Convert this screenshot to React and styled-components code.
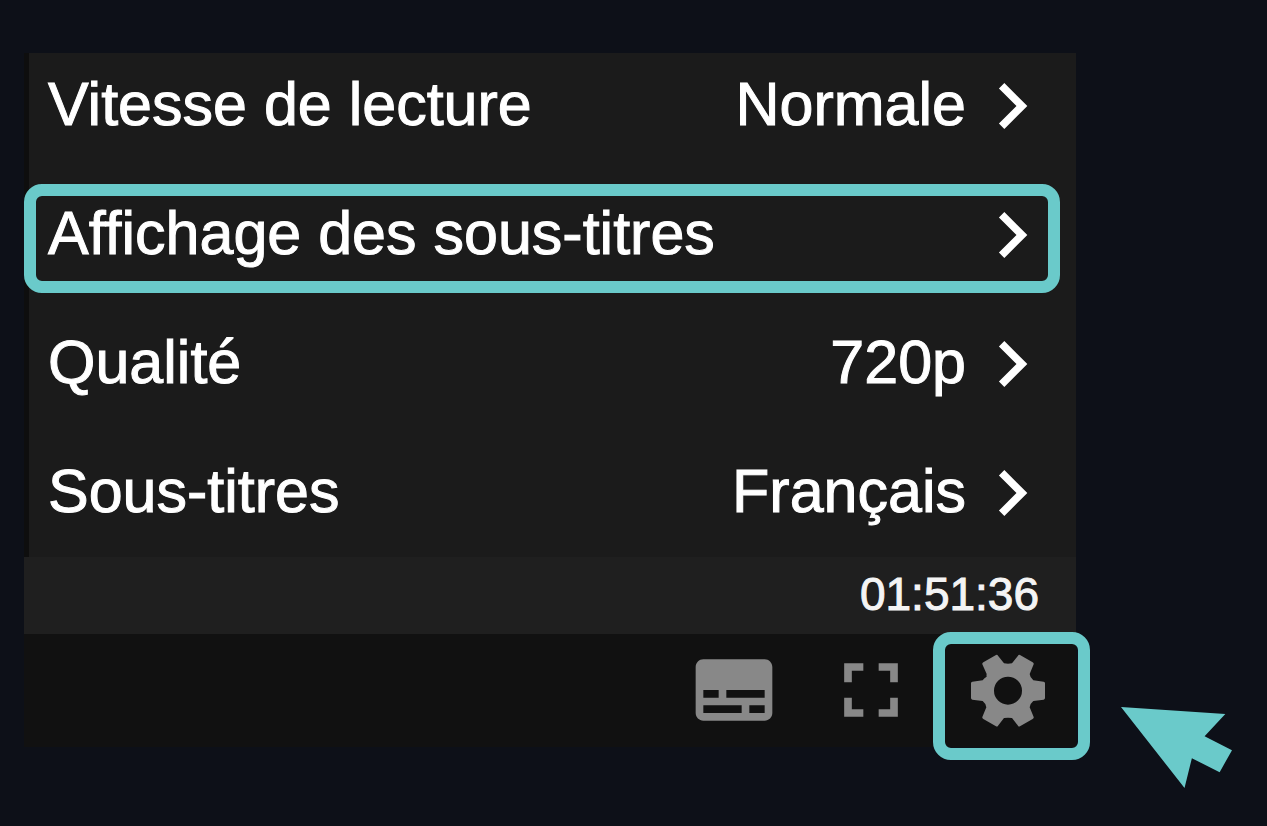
import React from "react";
import styled, { createGlobalStyle } from "styled-components";
import { MdChevronRight, MdFullscreen, MdSubtitles } from "react-icons/md";

const GlobalStyle = createGlobalStyle`
  :root {
    --page: #0d1018;
    --accent: #6acaca;
    --icon: #888888;
  }

  * {
    box-sizing: border-box;
  }

  body {
    margin: 0;
    background: var(--page);
    font-family: "Liberation Sans", Arial, sans-serif;
  }

  button {
    display: flex;
    align-items: center;
    margin: 0;
    padding: 0;
    border: 0;
    background: none;
    font: inherit;
    color: inherit;
    cursor: pointer;
  }
`;

const StyledPage = styled.main`
  min-height: 100vh;
  padding: 53px 191px 40px 24px;
`;

const StyledPlayer = styled.section`
  background: #111111;
  color: #ffffff;
`;

const StyledMenu = styled.ul`
  margin: 0;
  padding: 0;
  border-left: 5px solid #0e0e0e;
  background: #1b1b1b;
  list-style: none;
`;

const StyledItem = styled.li`
  position: relative;

  &:first-child {
    height: 117px;
    padding-bottom: 12px;
  }
`;

const StyledRow = styled.button`
  width: 100%;
  height: 129px;
  padding: 0 18px 0 19px;
  font-size: 61px;
  line-height: 70px;
  white-space: nowrap;

  ${StyledItem}:first-child & {
    height: 105px;
  }

  .label,
  .value {
    padding-bottom: 4px;
    -webkit-text-stroke: 1px currentColor;
  }

  .label {
    flex: 1;
    text-align: left;
  }
`;

const StyledHighlight = styled.span`
  position: absolute;
  inset: ${({ $inset }) => $inset};
  border: 12px solid var(--accent);
  border-radius: 18px;
  pointer-events: none;
`;

const StyledTime = styled.div`
  display: flex;
  align-items: center;
  justify-content: flex-end;
  height: 77px;
  padding: 0 37px 4px 0;
  background: #1f1f1f;
  color: #f4f4f4;
  font-size: 46px;
  line-height: 54px;
  -webkit-text-stroke: 1px currentColor;
`;

const StyledControls = styled.div`
  display: flex;
  align-items: center;
  justify-content: flex-end;
  gap: 45px;
  height: 113px;
  padding: 0 22px 2px 0;
  color: var(--icon);
`;

const StyledControl = styled.button`
  position: relative;
`;

const StyledPointer = styled.svg`
  position: absolute;
  top: 63px;
  left: 159px;
  width: 111px;
  height: 81px;
  fill: var(--accent);
  pointer-events: none;
`;

const options = [
  { label: "Vitesse de lecture", value: "Normale" },
  { label: "Affichage des sous-titres", highlighted: true },
  { label: "Qualité", value: "720p" },
  { label: "Sous-titres", value: "Français" },
];

function GearIcon() {
  return (
    <svg width="92" height="92" viewBox="-138 -140 276 276" fill="currentColor">
      <path
        fillRule="evenodd"
        d="M-107 -27L-76 -31Q-71 -38 -64 -42Q-65 -46 -64 -50L-77 -79Q-78 -83 -74 -85L-36 -107Q-32 -109 -30 -105L-12 -82Q0 -80 12 -82L30 -105Q32 -109 36 -107L74 -85Q78 -83 77 -79L65 -50Q66 -39 76 -31L107 -27Q111 -26 111 -22L111 22Q111 26 107 27L76 31Q66 39 65 50L77 79Q78 83 74 85L36 107Q32 109 30 105L12 82Q0 80 -12 82L-30 105Q-32 109 -36 107L-74 85Q-78 83 -77 79L-65 50Q-66 39 -76 31L-107 27Q-111 26 -111 22L-111 -22Q-111 -26 -107 -27ZM0 -42A42 42 0 1 0 0 42A42 42 0 1 0 0 -42Z"
      />
    </svg>
  );
}

export default function App() {
  return (
    <>
      <GlobalStyle />
      <StyledPage>
        <StyledPlayer>
          <StyledMenu>
            {options.map(({ label, value, highlighted }) => (
              <StyledItem key={label}>
                <StyledRow type="button">
                  <span className="label">{label}</span>
                  {value && <span className="value">{value}</span>}
                  <MdChevronRight size={92} />
                </StyledRow>
                {highlighted && <StyledHighlight $inset="14px 16px 6px -5px" />}
              </StyledItem>
            ))}
          </StyledMenu>

          <StyledTime>01:51:36</StyledTime>

          <StyledControls>
            <StyledControl type="button" aria-label="Sous-titres">
              <MdSubtitles size={92} />
            </StyledControl>
            <StyledControl type="button" aria-label="Plein écran">
              <MdFullscreen size={92} />
            </StyledControl>
            <StyledControl type="button" aria-label="Paramètres">
              <GearIcon />
              <StyledHighlight $inset="-12px -36px -24px -29px" />
              <StyledPointer viewBox="603 261 332 242">
                <path d="M603 261L915 282L853 348L935 390L898 456L815 414L793 503Z" />
              </StyledPointer>
            </StyledControl>
          </StyledControls>
        </StyledPlayer>
      </StyledPage>
    </>
  );
}
